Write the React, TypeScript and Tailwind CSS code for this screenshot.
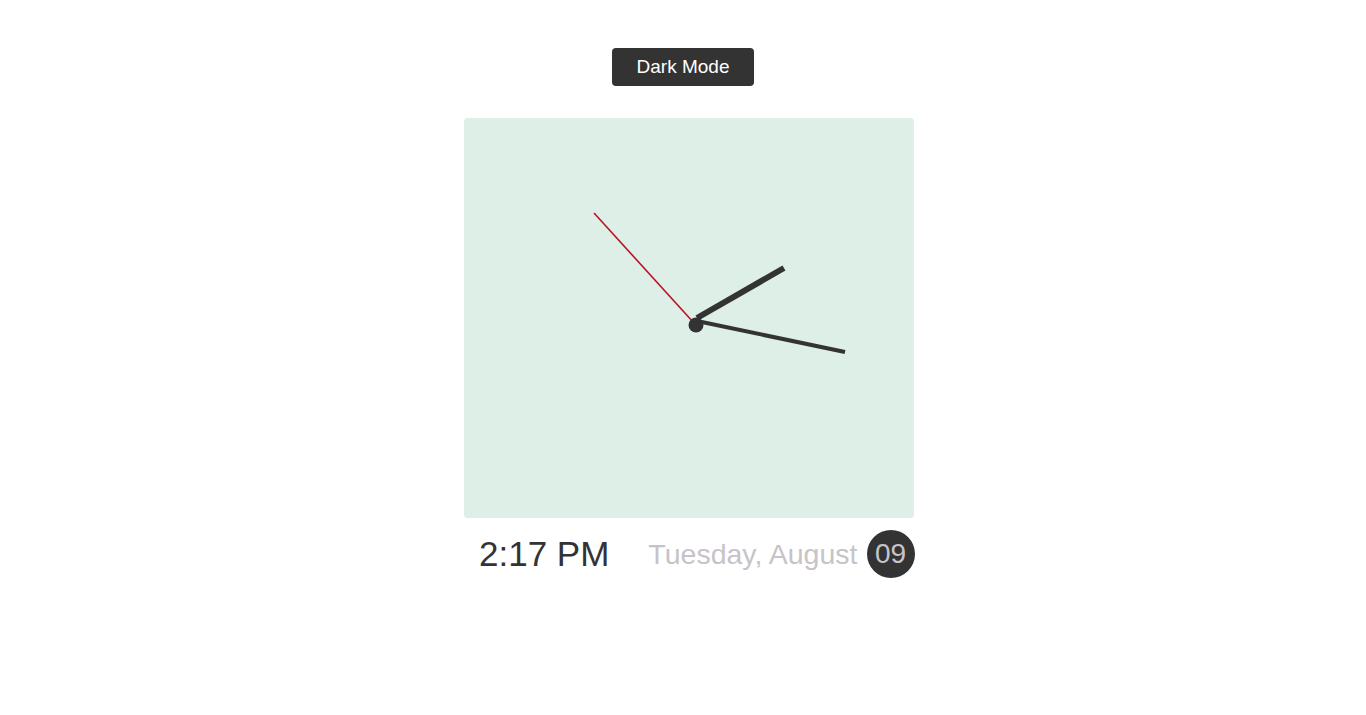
import React from "react";

export default function App() {
  return (
    <div className="min-h-[715px] w-full bg-white" style={{ fontFamily: '"Liberation Sans", Arial, sans-serif' }}>
      <div className="flex flex-col items-center pt-[48px]">
        <button className="h-[38px] w-[142px] rounded-[4px] bg-[#333333] text-[19px] text-white">
          Dark Mode
        </button>
      </div>
      <div className="ml-[464px] mt-[32px] w-[450px]">
        <div className="relative h-[400px] w-[450px] rounded-[4px] bg-[#ddefe6]">
          <svg className="absolute inset-0" width="450" height="400" viewBox="0 0 450 400">
            <line x1="233" y1="200" x2="320" y2="150" stroke="#333333" strokeWidth="6" />
            <line x1="233" y1="203" x2="381" y2="234" stroke="#333333" strokeWidth="4" />
            <line x1="230" y1="205" x2="130" y2="95" stroke="#b8142a" strokeWidth="1.6" />
            <circle cx="232" cy="207" r="7.5" fill="#333333" />
          </svg>
        </div>
        <div className="mt-[12px] flex w-max items-center whitespace-nowrap pl-[15px]">
          <span className="shrink-0 text-[35px] leading-[48px] text-[#333333]">2:17 PM</span>
          <span className="ml-[39px] shrink-0 text-[28.5px] leading-[48px] text-[#c7c3c9]">Tuesday, August</span>
          <span className="ml-[9px] flex h-[48px] w-[48px] shrink-0 items-center justify-center rounded-full bg-[#333333] text-[28px] text-[#c7c3c9]">
            09
          </span>
        </div>
      </div>
    </div>
  );
}
